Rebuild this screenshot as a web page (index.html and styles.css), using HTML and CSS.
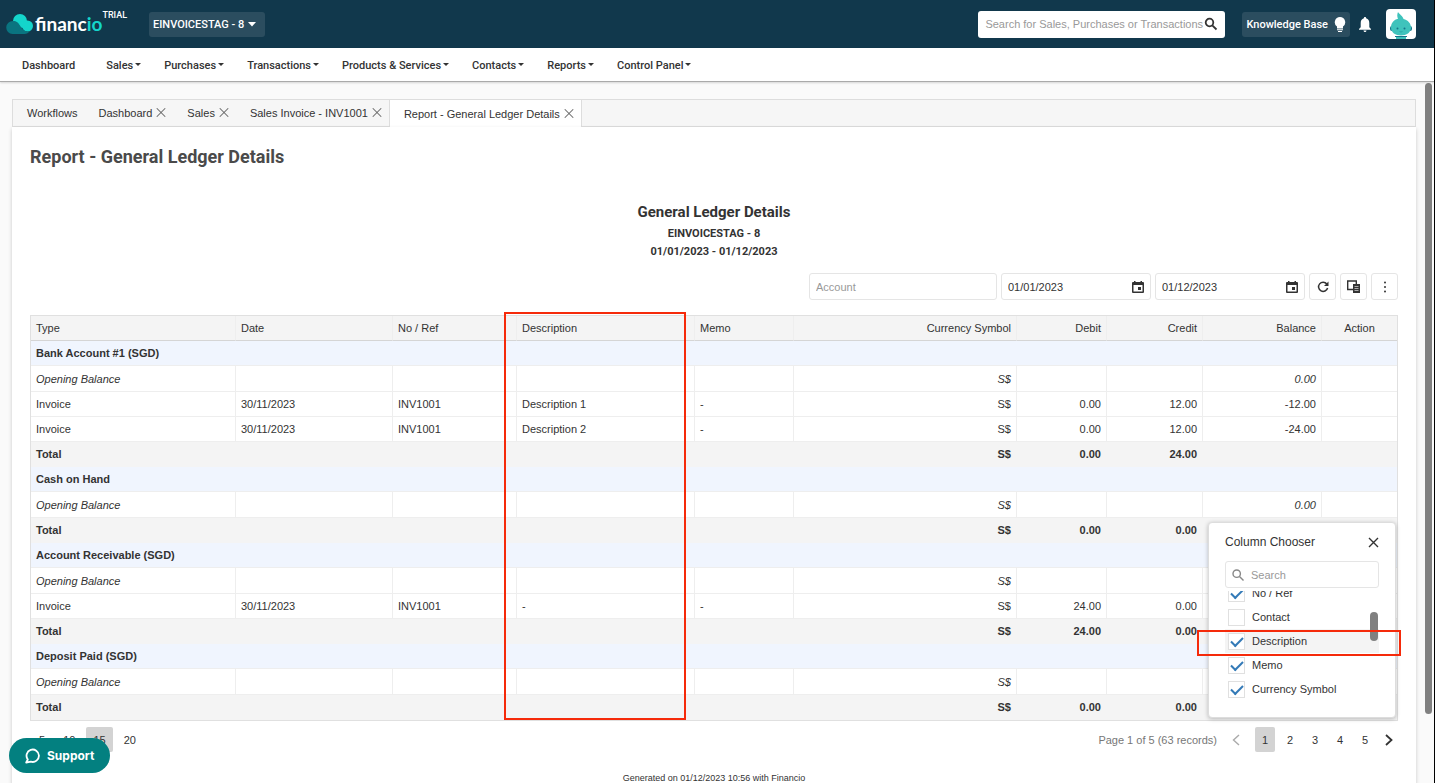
FILE: index.html
```html
<!DOCTYPE html>
<html lang="en">
<head>
    <meta charset="UTF-8">
    <meta name="viewport" content="width=device-width, initial-scale=1.0">
    <title>Report - General Ledger Details</title>
    <link rel="stylesheet" href="styles.css">
</head>
<body>
    <header class="topbar">
        <a href="#" class="logo">
            <svg class="logo-cloud" viewBox="0 0 28 20">
                <circle cx="14" cy="7" r="7" fill="#14d5cb"/>
                <circle cx="21.500" cy="12" r="5.500" fill="#14d5cb"/>
                <path d="M7 7c4 0 5 1.500 7 4.500 2.500 4 4.500 6 9 6.500-2 2-4 2-6 2H6.500A6.500 6.500 0 0 1 7 7z" fill="#0a7480"/>
                <path d="M13 9c2-2 4-2 5 0l1 6c-3-1-4-3-6-6z" fill="#14d5cb"/>
            </svg>
            <span class="wordmark">financ<span class="accent">io</span></span>
            <span class="trial">TRIAL</span>
        </a>
        <div class="company">
            <select class="company-select" aria-label="Company">
                <option>EINVOICESTAG - 8</option>
            </select>
            <svg class="company-caret" viewBox="0 0 8 5"><path d="M0 0h8L4 4.500z" fill="#fff"/></svg>
        </div>
        <div class="top-actions">
            <div class="search">
                <input type="text" class="search-input" aria-label="Search" placeholder="Search for Sales, Purchases or Transactions">
                <button class="icon-button" aria-label="Search">
                    <svg width="14" height="14" viewBox="0 0 14 14" fill="none" stroke="#333" stroke-width="1.800"><circle cx="5.500" cy="5.500" r="3.800"/><path d="M8.300 8.300l4.200 4.200"/></svg>
                </button>
            </div>
            <button class="knowledge">Knowledge Base
                <svg width="12" height="17" viewBox="0 0 12 17" fill="#fff"><path d="M6 1a5.300 5.300 0 0 0-3 9.600V12.500h6v-1.900A5.300 5.300 0 0 0 6 1z"/><path d="M3 13.300h6v1H3zM4 15h4v1H4z"/></svg>
            </button>
            <button class="icon-button bell" aria-label="Notifications">
                <svg width="12" height="15" viewBox="0 0 12 15" fill="#fff"><path d="M6 0c.7 0 1.100.4 1.100 1.300C9.300 1.900 10.300 3.700 10.300 6v4.200L12 12v.8H0V12l1.700-1.800V6c0-2.300 1-4.100 3.200-4.700C4.900.4 5.300 0 6 0zM4.500 13.500h3c0 .9-.6 1.500-1.500 1.500s-1.500-.6-1.500-1.500z"/></svg>
            </button>
            <button class="avatar" aria-label="Profile">
                <svg width="30" height="30" viewBox="0 0 30 30">
                    <rect x="4" y="17" width="22" height="5" rx="2" fill="#16758a"/>
                    <path d="M12 3c1 2 5 4 5.500 7 4.500 1 7.500 4.500 7.500 8.500 0 5-4.500 8-10 8s-10-3-10-8C5 14 8 10.500 12 9.800 11 8 11 5 12 3z" fill="#3fc3bc"/>
                    <rect x="10" y="27" width="10" height="3" fill="#3fc3bc"/>
                    <path d="M9 27h12v1H9z" fill="#16758a"/>
                    <circle cx="11.500" cy="19.500" r="1" fill="#16758a"/>
                    <circle cx="18.500" cy="19.500" r="1" fill="#16758a"/>
                    <path d="M13.500 22.500q1.500 1 3 0" stroke="#2ba9a6" fill="none"/>
                </svg>
            </button>
        </div>
    </header>

    <nav class="menu">
        <a href="#" class="menu-item">Dashboard</a>
        <button class="menu-item has-caret">Sales</button>
        <button class="menu-item has-caret">Purchases</button>
        <button class="menu-item has-caret">Transactions</button>
        <button class="menu-item has-caret">Products &amp; Services</button>
        <button class="menu-item has-caret">Contacts</button>
        <button class="menu-item has-caret">Reports</button>
        <button class="menu-item has-caret">Control Panel</button>
    </nav>

    <main class="page">
        <div class="tabs">
            <div class="tab"><a href="#">Workflows</a></div>
            <div class="tab"><a href="#">Dashboard</a><button class="tab-close" aria-label="Close Dashboard"></button></div>
            <div class="tab"><a href="#">Sales</a><button class="tab-close" aria-label="Close Sales"></button></div>
            <div class="tab"><a href="#">Sales Invoice - INV1001</a><button class="tab-close" aria-label="Close Sales Invoice"></button></div>
            <div class="tab active"><a href="#">Report - General Ledger Details</a><button class="tab-close" aria-label="Close Report"></button></div>
        </div>

        <section class="panel">
            <h1>Report - General Ledger Details</h1>
            <div class="report-head">
                <h2>General Ledger Details</h2>
                <p>EINVOICESTAG - 8</p>
                <p>01/01/2023 - 01/12/2023</p>
            </div>

            <div class="toolbar">
                <input type="text" class="field account" aria-label="Account" placeholder="Account">
                <div class="field date">
                    <input type="text" aria-label="From date" value="01/01/2023">
                    <button class="icon-button" aria-label="Open calendar"><svg width="12" height="12" viewBox="0 0 12 12"><path d="M2 0h1.500v1h5V0H10v1h1q1 0 1 1v9q0 1-1 1H1q-1 0-1-1V2q0-1 1-1h1zM1.500 4v6.500h9V4zM6 6h3v3H6z" fill="#333" fill-rule="evenodd"/></svg></button>
                </div>
                <div class="field date">
                    <input type="text" aria-label="To date" value="01/12/2023">
                    <button class="icon-button" aria-label="Open calendar"><svg width="12" height="12" viewBox="0 0 12 12"><path d="M2 0h1.500v1h5V0H10v1h1q1 0 1 1v9q0 1-1 1H1q-1 0-1-1V2q0-1 1-1h1zM1.500 4v6.500h9V4zM6 6h3v3H6z" fill="#333" fill-rule="evenodd"/></svg></button>
                </div>
                <button class="tool" aria-label="Refresh">
                    <svg width="12" height="12" viewBox="0 0 12 12" fill="none" stroke="#333" stroke-width="1.500"><path d="M9.800 3A4.600 4.600 0 1 0 10.600 7"/><path d="M11.500.5v4.500H7z" fill="#333" stroke="none"/></svg>
                </button>
                <button class="tool" aria-label="Column chooser">
                    <svg width="13" height="13" viewBox="0 0 13 13"><path d="M.7 1h8.600v3M.7.300V9.500H6" fill="none" stroke="#333" stroke-width="1.400"/><path d="M6 4h7v9H6z" fill="#333"/><path d="M7.500 6.500h4M7.500 8.500h4M7.500 10.500h4" stroke="#ccc" stroke-width=".8"/></svg>
                </button>
                <button class="tool" aria-label="More">
                    <svg width="4" height="12" viewBox="0 0 4 12" fill="#333"><circle cx="2" cy="1.500" r="1"/><circle cx="2" cy="6" r="1"/><circle cx="2" cy="10.500" r="1"/></svg>
                </button>
            </div>

            <div class="grid">
                <table class="ledger">
                    <colgroup>
                        <col class="c-type"><col class="c-date"><col class="c-ref"><col class="c-desc"><col class="c-memo">
                        <col><col class="c-debit"><col class="c-credit"><col class="c-balance"><col class="c-action">
                    </colgroup>
                    <thead>
                        <tr><th>Type</th><th>Date</th><th>No / Ref</th><th>Description</th><th>Memo</th><th class="num">Currency Symbol</th><th class="num">Debit</th><th class="num">Credit</th><th class="num">Balance</th><th class="mid">Action</th></tr>
                    </thead>
                    <tbody>
                        <tr class="group"><td colspan="10">Bank Account #1 (SGD)</td></tr>
                        <tr class="opening"><td>Opening Balance</td><td></td><td></td><td></td><td></td><td class="num">S$</td><td></td><td></td><td class="num">0.00</td><td></td></tr>
                        <tr><td>Invoice</td><td>30/11/2023</td><td>INV1001</td><td>Description 1</td><td>-</td><td class="num">S$</td><td class="num">0.00</td><td class="num">12.00</td><td class="num">-12.00</td><td></td></tr>
                        <tr><td>Invoice</td><td>30/11/2023</td><td>INV1001</td><td>Description 2</td><td>-</td><td class="num">S$</td><td class="num">0.00</td><td class="num">12.00</td><td class="num">-24.00</td><td></td></tr>
                        <tr class="total"><td>Total</td><td></td><td></td><td></td><td></td><td class="num">S$</td><td class="num">0.00</td><td class="num">24.00</td><td></td><td></td></tr>
                        <tr class="group"><td colspan="10">Cash on Hand</td></tr>
                        <tr class="opening"><td>Opening Balance</td><td></td><td></td><td></td><td></td><td class="num">S$</td><td></td><td></td><td class="num">0.00</td><td></td></tr>
                        <tr class="total"><td>Total</td><td></td><td></td><td></td><td></td><td class="num">S$</td><td class="num">0.00</td><td class="num">0.00</td><td></td><td></td></tr>
                        <tr class="group"><td colspan="10">Account Receivable (SGD)</td></tr>
                        <tr class="opening"><td>Opening Balance</td><td></td><td></td><td></td><td></td><td class="num">S$</td><td></td><td></td><td></td><td></td></tr>
                        <tr><td>Invoice</td><td>30/11/2023</td><td>INV1001</td><td>-</td><td>-</td><td class="num">S$</td><td class="num">24.00</td><td class="num">0.00</td><td></td><td></td></tr>
                        <tr class="total"><td>Total</td><td></td><td></td><td></td><td></td><td class="num">S$</td><td class="num">24.00</td><td class="num">0.00</td><td></td><td></td></tr>
                        <tr class="group"><td colspan="10">Deposit Paid (SGD)</td></tr>
                        <tr class="opening"><td>Opening Balance</td><td></td><td></td><td></td><td></td><td class="num">S$</td><td></td><td></td><td></td><td></td></tr>
                        <tr class="total"><td>Total</td><td></td><td></td><td></td><td></td><td class="num">S$</td><td class="num">0.00</td><td class="num">0.00</td><td></td><td></td></tr>
                    </tbody>
                </table>

                <div class="marker marker-column"></div>

                <div class="chooser">
                    <div class="chooser-head">
                        <span>Column Chooser</span>
                        <button class="icon-button" aria-label="Close">
                            <svg width="11" height="11" viewBox="0 0 11 11" stroke="#333" stroke-width="1.400"><path d="M1 1l9 9M10 1l-9 9"/></svg>
                        </button>
                    </div>
                    <div class="chooser-search">
                        <svg width="12" height="12" viewBox="0 0 12 12" fill="none" stroke="#888" stroke-width="1.400"><circle cx="4.700" cy="4.700" r="3.700"/><path d="M7.500 7.500l4 4"/></svg>
                        <input type="text" aria-label="Search columns" placeholder="Search">
                    </div>
                    <div class="chooser-list">
                        <label class="choice"><input type="checkbox" checked>No / Ref</label>
                        <label class="choice"><input type="checkbox">Contact</label>
                        <label class="choice current"><input type="checkbox" checked>Description</label>
                        <label class="choice"><input type="checkbox" checked>Memo</label>
                        <label class="choice"><input type="checkbox" checked>Currency Symbol</label>
                        <div class="chooser-thumb"></div>
                    </div>
                    <div class="marker marker-choice"></div>
                </div>
            </div>

            <div class="pager">
                <div class="page-sizes">
                    <button>5</button>
                    <button>10</button>
                    <button class="selected">15</button>
                    <button>20</button>
                </div>
                <div class="page-nav">
                    <span class="page-info">Page 1 of 5 (63 records)</span>
                    <button class="arrow" aria-label="Previous page"><svg width="8" height="12" viewBox="0 0 8 12" fill="none" stroke="#aaa" stroke-width="1.400"><path d="M7 1L1.500 6 7 11"/></svg></button>
                    <button class="selected">1</button>
                    <button>2</button>
                    <button>3</button>
                    <button>4</button>
                    <button>5</button>
                    <button class="arrow" aria-label="Next page"><svg width="8" height="12" viewBox="0 0 8 12" fill="none" stroke="#333" stroke-width="1.800"><path d="M1 1l5.500 5L1 11"/></svg></button>
                </div>
            </div>

            <p class="generated">Generated on 01/12/2023 10:56 with Financio</p>
        </section>
        <div class="scroll-thumb"></div>
    </main>

    <button class="support">
        <svg width="16" height="16" viewBox="0 0 16 16" fill="none" stroke="#fff" stroke-width="1.800"><path d="M1.200 14.500l1.600-3A6.200 6.200 0 1 1 6 13.700z" stroke-linejoin="round"/></svg>
        Support
    </button>
</body>
</html>
```
FILE: styles.css
```css
* {
    box-sizing: border-box;
}
body {
    display: flex;
    flex-direction: column;
    height: 100vh;
    margin: 0;
    overflow: hidden;
    border-right: 1px solid #000;
    background-color: #fafafa;
    font-family: "Liberation Sans", Arial, sans-serif;
    font-size: 11px;
    color: #333;
}
button, input, select {
    margin: 0;
    padding: 0;
    border: none;
    background: none;
    font: inherit;
    color: inherit;
    outline: none;
}
button {
    cursor: pointer;
}
a {
    color: inherit;
    text-decoration: none;
}
svg {
    display: block;
    flex-shrink: 0;
}
::placeholder {
    color: #999;
    opacity: 1;
}
.icon-button {
    display: flex;
    align-items: center;
    justify-content: center;
}

/* top bar */
.topbar {
    display: flex;
    align-items: center;
    flex-shrink: 0;
    height: 48px;
    padding: 0 18px 0 6px;
    background-color: #11384c;
    font-family: Roboto, sans-serif;
    font-weight: 500;
    color: #fff;
}
.logo {
    display: flex;
    align-items: center;
    width: 143px;
}
.logo-cloud {
    width: 28px;
    height: 20px;
}
.wordmark {
    margin-left: 1px;
    font-family: Lato, sans-serif;
    font-size: 19px;
    font-weight: 700;
    line-height: 20px;
}
.accent {
    color: #14d5cb;
}
.trial {
    align-self: flex-start;
    font-size: 9px;
    line-height: 10px;
    margin-top: -4px;
}
.company {
    display: flex;
    align-items: center;
    position: relative;
}
.company-select {
    appearance: none;
    width: 116px;
    height: 25px;
    padding-left: 4px;
    border-radius: 3px;
    background-color: #2b4d5f;
}
.company-caret {
    position: absolute;
    right: 9px;
    width: 8px;
    height: 5px;
    pointer-events: none;
}
.top-actions {
    display: flex;
    align-items: center;
    margin-left: auto;
}
.search {
    display: flex;
    align-items: center;
    width: 247px;
    height: 27px;
    padding: 0 7px;
    border-radius: 3px;
    background-color: #fff;
    color: #333;
}
.search-input {
    flex: 1;
    min-width: 0;
    font-family: "Liberation Sans", Arial, sans-serif;
    font-weight: 400;
}
.knowledge {
    display: flex;
    align-items: center;
    gap: 6px;
    height: 25px;
    margin-left: 17px;
    padding: 0 4px;
    border-radius: 3px;
    background-color: #2b4d5f;
}
.bell {
    margin: 0 15px 0 9px;
}
.avatar {
    width: 30px;
    height: 30px;
    border-radius: 4px;
    background-color: #fff;
}

/* main menu */
.menu {
    display: flex;
    align-items: center;
    flex-shrink: 0;
    gap: 23px;
    height: 34px;
    padding: 2px 22px 0;
    border-bottom: 1px solid #aaa;
    background-color: #fff;
    box-shadow: 0 1px 2px rgba(0, 0, 0, 0.15);
    font-family: Roboto, sans-serif;
    font-weight: 500;
    z-index: 1;
}
.menu-item {
    display: flex;
    align-items: center;
    white-space: nowrap;
}
a.menu-item {
    margin-right: 8px;
}
.has-caret::after {
    content: "";
    margin: 0 0 2px 2px;
    border: 3px solid transparent;
    border-top-color: #333;
    border-bottom: none;
}

/* tabs */
.page {
    display: flex;
    flex-direction: column;
    flex: 1;
    position: relative;
    min-height: 0;
    padding: 17px 18px 0 12px;
}
.tabs {
    display: flex;
    flex-shrink: 0;
    height: 28px;
    border: 1px solid #ddd;
    background-color: #f6f6f6;
}
.tab {
    display: flex;
    align-items: center;
    gap: 4px;
    padding: 0 7px 0 14px;
}
.tab.active {
    margin-bottom: -1px;
    border: solid #ddd;
    border-width: 0 1px;
    background-color: #fff;
}
.tab-close {
    position: relative;
    width: 10px;
    height: 12px;
}
.tab-close::before,
.tab-close::after {
    content: "";
    position: absolute;
    left: -1px;
    top: 5px;
    width: 12px;
    height: 1px;
    background-color: #666;
    transform: rotate(45deg);
}
.tab-close::after {
    transform: rotate(-45deg);
}

/* report */
.panel {
    flex: 1;
    padding: 18px 18px 0;
    background-color: #fff;
    box-shadow: 0 2px 4px rgba(0, 0, 0, 0.2);
}
.panel h1 {
    margin: 0;
    font-family: Roboto, sans-serif;
    font-size: 18px;
    line-height: 24px;
    color: #4a4a4a;
}
.report-head {
    margin-top: 32px;
    text-align: center;
    font-family: Roboto, sans-serif;
    font-weight: 700;
}
.report-head h2 {
    margin: 0 0 2px;
    font-size: 15px;
    line-height: 22px;
}
.report-head p {
    margin: 0;
    line-height: 18px;
}
.toolbar {
    display: flex;
    justify-content: flex-end;
    gap: 4px;
    margin-top: 12px;
}
.field,
.tool {
    height: 27px;
    border: 1px solid #e5e5e5;
    border-radius: 3px;
}
.account {
    width: 188px;
    padding: 0 6px;
}
.date {
    display: flex;
    align-items: center;
    width: 150px;
    padding: 0 6px;
}
.date input {
    flex: 1;
    min-width: 0;
}
.tool {
    display: flex;
    align-items: center;
    justify-content: center;
    width: 27px;
}

/* ledger table */
.grid {
    position: relative;
    margin-top: 15px;
    border: 1px solid #e0e0e0;
}
.ledger {
    width: 100%;
    table-layout: fixed;
    border-collapse: separate;
    border-spacing: 0;
}
.c-type { width: 205px; }
.c-date { width: 157px; }
.c-ref { width: 124px; }
.c-desc { width: 178px; }
.c-memo { width: 99px; }
.c-debit { width: 90px; }
.c-credit { width: 96px; }
.c-balance { width: 119px; }
.c-action { width: 75px; }
.ledger th,
.ledger td {
    height: 25px;
    padding: 0 5px;
    border-right: 1px solid #eee;
    border-bottom: 1px solid #eee;
    line-height: 14px;
    text-align: left;
    white-space: nowrap;
}
.ledger th {
    border-bottom-color: #d5d5d5;
    background-color: #f4f4f4;
    font-weight: 400;
}
.ledger tr > :last-child {
    border-right: none;
}
.ledger .num {
    text-align: right;
}
.ledger .mid {
    text-align: center;
}
.ledger .group td {
    background-color: #f0f5fe;
    font-weight: 700;
}
.ledger .opening td {
    height: 26px;
    font-style: italic;
}
.ledger .total td {
    border-color: #f4f4f4;
    background-color: #f4f4f4;
    font-weight: 700;
}

/* highlighted areas */
.marker {
    position: absolute;
    border: 2px solid #f52a0a;
    pointer-events: none;
}
.marker-column {
    top: -4px;
    bottom: 0;
    left: 473px;
    width: 182px;
}
.marker-choice {
    top: 107px;
    left: -12px;
    right: -6px;
    height: 26px;
}

/* column chooser */
.chooser {
    position: absolute;
    right: 1px;
    bottom: 2px;
    width: 188px;
    padding: 8px 16px 16px;
    border: 1px solid #ddd;
    border-radius: 4px;
    background-color: #fff;
    box-shadow: 0 1px 4px rgba(0, 0, 0, 0.25);
}
.chooser-head {
    display: flex;
    align-items: center;
    justify-content: space-between;
    height: 22px;
    font-size: 12px;
}
.chooser-search {
    display: flex;
    align-items: center;
    gap: 7px;
    height: 27px;
    margin: 8px 0 3px;
    padding: 0 6px;
    border: 1px solid #e5e5e5;
    border-radius: 3px;
}
.chooser-search input {
    flex: 1;
    min-width: 0;
}
.chooser-list {
    display: flex;
    flex-direction: column;
    justify-content: flex-end;
    position: relative;
    height: 110px;
    overflow: hidden;
}
.choice {
    display: flex;
    align-items: center;
    flex-shrink: 0;
    gap: 7px;
    height: 24px;
    padding-left: 3px;
}
.choice.current {
    background-color: #f4f4f4;
}
.choice input {
    appearance: none;
    display: flex;
    justify-content: center;
    width: 17px;
    height: 17px;
    border: 1px solid #e0e0e0;
    background-color: #fff;
}
.choice input:checked::after {
    content: "";
    width: 10px;
    height: 5px;
    margin-top: 3px;
    border: solid #337ab7;
    border-width: 0 0 2px 2px;
    transform: rotate(-45deg);
}
.chooser-thumb {
    position: absolute;
    top: 21px;
    right: 1px;
    width: 8px;
    height: 29px;
    border-radius: 4px;
    background-color: #808080;
}

/* pager */
.pager {
    display: flex;
    justify-content: space-between;
    margin-top: 6px;
}
.page-sizes,
.page-nav {
    display: flex;
    align-items: center;
}
.page-sizes {
    gap: 4px;
    padding-left: 2px;
}
.page-sizes button {
    min-width: 20px;
    height: 25px;
    padding: 0 7px;
}
.page-nav {
    gap: 5px;
}
.page-nav button {
    width: 20px;
    height: 25px;
}
.page-nav .arrow {
    display: flex;
    align-items: center;
    justify-content: center;
    width: 28px;
}
.page-nav .arrow:last-child {
    width: 18px;
}
.pager .selected {
    border-radius: 2px;
    background-color: #d3d3d3;
}
.page-info {
    color: #777;
}
.generated {
    margin: 20px 0 0;
    text-align: center;
    font-size: 9px;
    line-height: 12px;
}
.scroll-thumb {
    position: absolute;
    top: 1px;
    right: 2px;
    width: 7px;
    height: 90%;
    border-radius: 4px;
    background-color: #808080;
}

/* support button */
.support {
    display: flex;
    align-items: center;
    gap: 6px;
    position: fixed;
    left: 9px;
    bottom: 10px;
    height: 35px;
    padding: 0 16px;
    border-radius: 18px;
    background-color: #038080;
    font-family: Inter, sans-serif;
    font-size: 12px;
    font-weight: 700;
    color: #fff;
}
```
